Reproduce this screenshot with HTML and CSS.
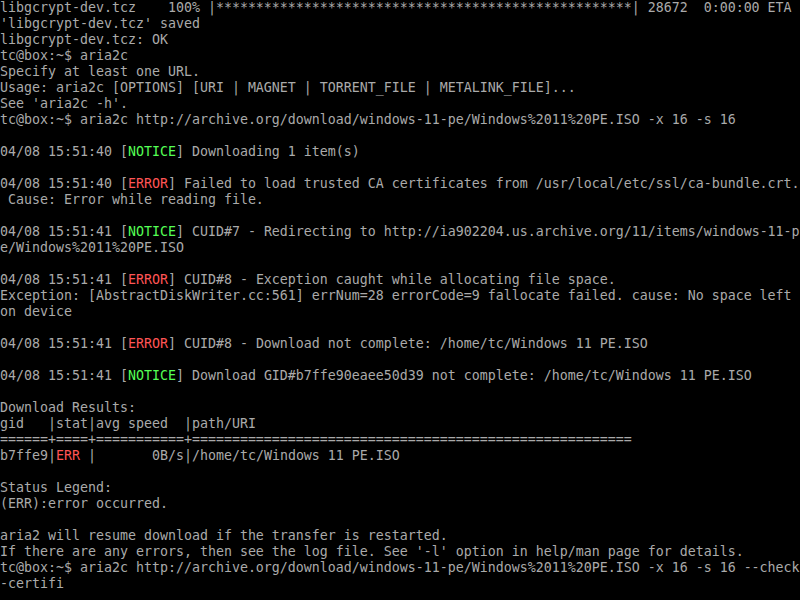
FILE: index.html
```html
<!DOCTYPE html>
<html lang="en">
<head>
<meta charset="utf-8">
<title>tty</title>
<link rel="stylesheet" href="styles.css">
</head>
<body>
<pre class="console">libgcrypt-dev.tcz    100% |****************************************************| 28672  0:00:00 ETA
'libgcrypt-dev.tcz' saved
libgcrypt-dev.tcz: OK
tc@box:~$ aria2c
Specify at least one URL.
Usage: aria2c [OPTIONS] [URI | MAGNET | TORRENT_FILE | METALINK_FILE]...
See 'aria2c -h'.
tc@box:~$ aria2c http://archive.org/download/windows-11-pe/Windows%2011%20PE.ISO -x 16 -s 16

04/08 15:51:40 [<span class="ok">NOTICE</span>] Downloading 1 item(s)

04/08 15:51:40 [<span class="err">ERROR</span>] Failed to load trusted CA certificates from /usr/local/etc/ssl/ca-bundle.crt.
 Cause: Error while reading file.

04/08 15:51:41 [<span class="ok">NOTICE</span>] CUID#7 - Redirecting to http://ia902204.us.archive.org/11/items/windows-11-p
e/Windows%2011%20PE.ISO

04/08 15:51:41 [<span class="err">ERROR</span>] CUID#8 - Exception caught while allocating file space.
Exception: [AbstractDiskWriter.cc:561] errNum=28 errorCode=9 fallocate failed. cause: No space left
on device

04/08 15:51:41 [<span class="err">ERROR</span>] CUID#8 - Download not complete: /home/tc/Windows 11 PE.ISO

04/08 15:51:41 [<span class="ok">NOTICE</span>] Download GID#b7ffe90eaee50d39 not complete: /home/tc/Windows 11 PE.ISO

Download Results:
gid   |stat|avg speed  |path/URI
======+====+===========+=======================================================
b7ffe9|<span class="err">ERR</span> |       0B/s|/home/tc/Windows 11 PE.ISO

Status Legend:
(ERR):error occurred.

aria2 will resume download if the transfer is restarted.
If there are any errors, then see the log file. See '-l' option in help/man page for details.
tc@box:~$ aria2c http://archive.org/download/windows-11-pe/Windows%2011%20PE.ISO -x 16 -s 16 --check
-certifi</pre>
</body>
</html>
```
FILE: styles.css
```css
html, body {
  margin: 0;
  padding: 0;
  background: #000;
}
body {
  width: 800px;
  height: 600px;
  overflow: hidden;
}
.console {
  margin: 0;
  padding: 0;
  color: #aaaaaa;
  font-family: "DejaVu Sans Mono", "Liberation Mono", monospace;
  font-size: 13.29px;
  line-height: 16px;
  white-space: pre;
}
.ok {
  color: #55ff55;
}
.err {
  color: #ff5555;
}
```
